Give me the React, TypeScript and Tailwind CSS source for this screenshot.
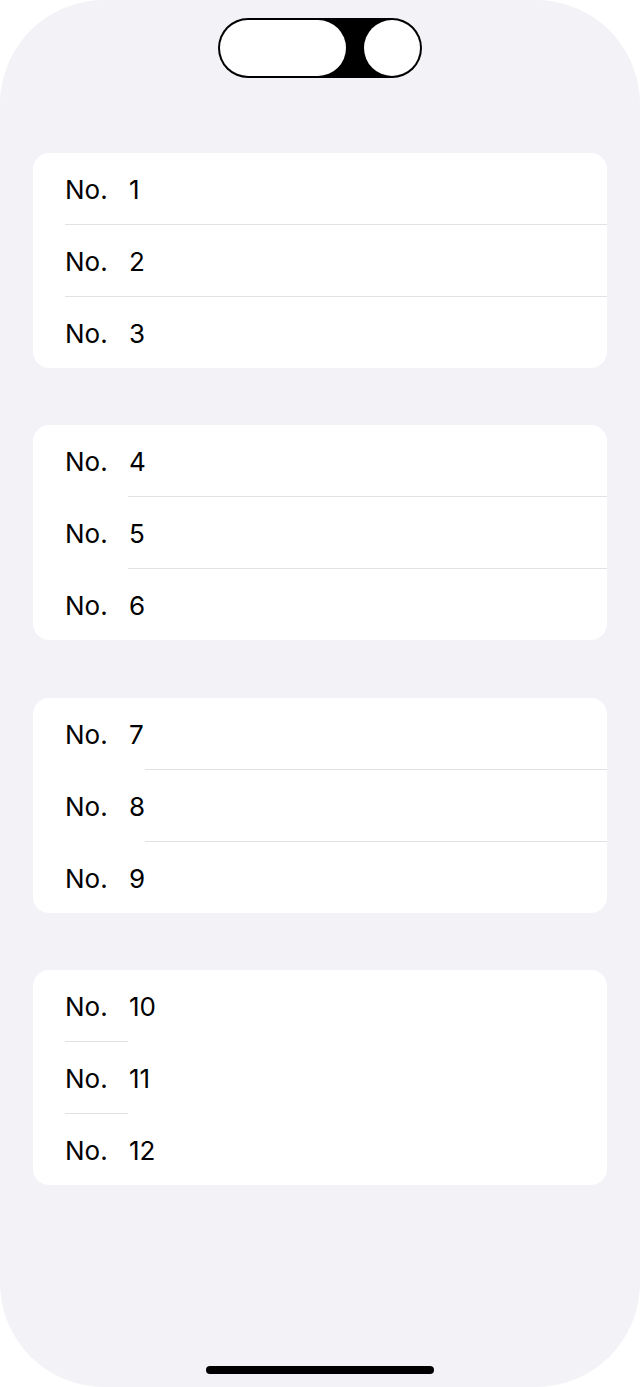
import React from 'react'

type Group = {
    items: number[]
    // separator geometry inside the card
    inset: string
    width: string
}

const groups: Group[] = [
    { items: [1, 2, 3], inset: 'ml-[32px]', width: 'flex-1' },
    { items: [4, 5, 6], inset: 'ml-[95px]', width: 'flex-1' },
    { items: [7, 8, 9], inset: 'ml-[112px]', width: 'flex-1' },
    { items: [10, 11, 12], inset: 'ml-[32px]', width: 'w-[63px]' },
]

function DynamicIsland() {
    return (
        <svg width="204" height="60" viewBox="0 0 204 60" className="block">
            <rect x="0" y="0" width="204" height="60" rx="30" fill="#000" />
            <rect x="2" y="2" width="126" height="56" rx="28" fill="#fff" />
            <circle cx="174" cy="30" r="28" fill="#fff" />
        </svg>
    )
}

function Row({ n }: { n: number }) {
    return (
        <div className="h-[71px] flex items-center pl-[32px] pt-[2px] text-[26px] text-black">
            <span className="w-[64px]">No.</span>
            <span>{n}</span>
        </div>
    )
}

function Card({ group }: { group: Group }) {
    return (
        <div className="bg-white rounded-[16px] flex flex-col overflow-hidden">
            {group.items.map((n, i) => (
                <React.Fragment key={n}>
                    <Row n={n} />
                    {i < group.items.length - 1 && (
                        <div className="flex">
                            <div className={`${group.inset} ${group.width} h-px bg-[#e1e1e6]`} />
                        </div>
                    )}
                </React.Fragment>
            ))}
        </div>
    )
}

export default function App() {
    return (
        <div
            className="w-[640px] h-[1387px] bg-white"
            style={{ fontFamily: 'Inter, "Liberation Sans", sans-serif' }}
        >
            <div className="h-full rounded-[104px] bg-[#f2f2f7] flex flex-col">
                {/* Island */}
                <div className="pt-[18px] flex justify-center">
                    <DynamicIsland />
                </div>

                {/* Grouped list */}
                <div className="mt-[75px] px-[33px] flex flex-col gap-[57.3px]">
                    {groups.map((g, i) => (
                        <Card key={i} group={g} />
                    ))}
                </div>

                {/* Home indicator */}
                <div className="mt-auto pb-[13px] flex justify-center">
                    <div className="w-[228px] h-[8px] rounded-full bg-black" />
                </div>
            </div>
        </div>
    )
}
